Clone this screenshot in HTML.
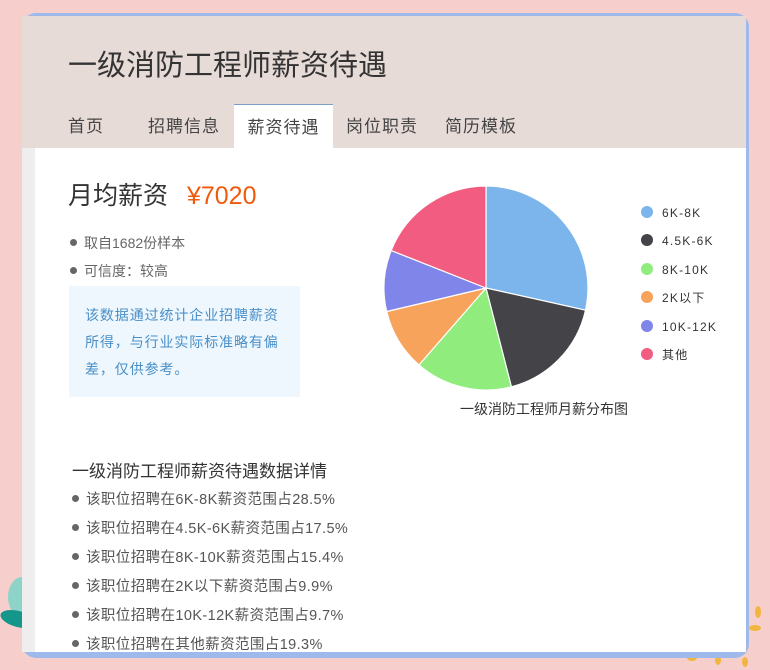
<!DOCTYPE html>
<html><head><meta charset="utf-8"><style>
*{margin:0;padding:0;box-sizing:border-box}
body{width:770px;height:670px;overflow:hidden;background:#f6cfcc;font-family:"Liberation Sans","Noto Sans CJK SC",sans-serif;position:relative}
.card{position:absolute;left:22px;top:13px;width:727px;height:645px;border-radius:14px;background:#9fb9ea}
.inner{position:absolute;left:22px;top:16px;width:724px;height:636px;background:#fff;overflow:hidden}
.strip{position:absolute;left:0;top:0;width:13px;height:100%;background:#eeeeee}
.head{position:absolute;left:0;top:0;width:724px;height:132px;background:#e7dbd8}
.title{position:absolute;left:46px;top:26px;font-size:29px;color:#333}
.tab{position:absolute;top:88px;height:44px;line-height:46px;font-size:17px;letter-spacing:1px;color:#444}
.tab.on{background:#fff;border-top:1px solid #7aa0c8;text-align:center}
.t{position:absolute;color:#333}
.dot{display:inline-block;width:7px;height:7px;border-radius:50%;background:#666;margin-right:7px;vertical-align:middle;position:relative;top:-2px}
</style></head><body>
<svg style="position:absolute;left:0;top:575px" width="40" height="70"><ellipse cx="22" cy="22" rx="14" ry="20" fill="#8dd3c8"/><ellipse cx="18" cy="44" rx="18" ry="8" fill="#15968a" transform="rotate(15 18 44)"/></svg>
<svg style="position:absolute;left:680px;top:600px" width="90" height="70"><ellipse cx="78" cy="12" rx="3" ry="6" fill="#f2b640"/><ellipse cx="62" cy="44" rx="3" ry="6" fill="#f2b640" transform="rotate(30 62 44)"/><ellipse cx="75" cy="28" rx="6" ry="3" fill="#f2b640"/><ellipse cx="38" cy="60" rx="3" ry="5" fill="#f2b640"/><ellipse cx="65" cy="62" rx="3" ry="5" fill="#f2b640"/><ellipse cx="12" cy="58" rx="5" ry="3" fill="#f2b640"/></svg>
<div class="card"></div>
<div class="inner">
<div class="strip"></div>
<div class="head">
<div class="title">一级消防工程师薪资待遇</div>
<div class="tab" style="left:46px">首页</div>
<div class="tab" style="left:126px">招聘信息</div>
<div class="tab on" style="left:212px;width:99px">薪资待遇</div>
<div class="tab" style="left:324px">岗位职责</div>
<div class="tab" style="left:423px">简历模板</div>
</div>
<div class="t" style="left:46px;top:160px;font-size:25px;color:#333">月均薪资 <span style="color:#f15a0c;margin-left:12px">¥7020</span></div>
<div class="t" style="left:48px;top:217px;font-size:14px;color:#666"><span class="dot"></span>取自1682份样本</div>
<div class="t" style="left:48px;top:245px;font-size:14px;color:#666"><span class="dot"></span>可信度：较高</div>
<div style="position:absolute;left:47px;top:270px;width:231px;height:111px;background:#edf7fd;padding:16px 20px 0 16px;font-size:14px;line-height:27px;letter-spacing:0.9px;color:#4a8fc8">该数据通过统计企业招聘薪资所得，与行业实际标准略有偏差，仅供参考。</div>
<div class="t" style="left:50px;top:441px;font-size:17px;color:#333">一级消防工程师薪资待遇数据详情</div>
<div class="t" style="left:50px;top:470px;font-size:14.5px;letter-spacing:0.4px;line-height:29px;color:#555">
<div><span class="dot"></span>该职位招聘在6K-8K薪资范围占28.5%</div>
<div><span class="dot"></span>该职位招聘在4.5K-6K薪资范围占17.5%</div>
<div><span class="dot"></span>该职位招聘在8K-10K薪资范围占15.4%</div>
<div><span class="dot"></span>该职位招聘在2K以下薪资范围占9.9%</div>
<div><span class="dot"></span>该职位招聘在10K-12K薪资范围占9.7%</div>
<div><span class="dot"></span>该职位招聘在其他薪资范围占19.3%</div>
</div>
</div>
<svg style="position:absolute;left:0;top:0" width="770" height="670">
<g stroke="#fff" stroke-width="1.2" stroke-linejoin="round">
<path d="M486 288 L486 186 A102 102 0 0 1 585.5 310.2Z" fill="#7cb5ec"/>
<path d="M486 288 L585.5 310.2 A102 102 0 0 1 511.4 386.8Z" fill="#434348"/>
<path d="M486 288 L511.4 386.8 A102 102 0 0 1 419 364.9Z" fill="#90ed7d"/>
<path d="M486 288 L419 364.9 A102 102 0 0 1 386.7 311.5Z" fill="#f7a35c"/>
<path d="M486 288 L386.7 311.5 A102 102 0 0 1 391.2 250.5Z" fill="#8085e9"/>
<path d="M486 288 L391.2 250.5 A102 102 0 0 1 486 186Z" fill="#f15c80"/>
</g>
<text x="544" y="414" font-size="14" fill="#333" text-anchor="middle" font-family="Liberation Sans,Noto Sans CJK SC,sans-serif">一级消防工程师月薪分布图</text>
<g font-size="12" fill="#333" letter-spacing="1.2" font-family="Liberation Sans,Noto Sans CJK SC,sans-serif">
<circle cx="647" cy="212" r="6" fill="#7cb5ec"/><text x="662" y="217">6K-8K</text>
<circle cx="647" cy="240" r="6" fill="#434348"/><text x="662" y="245">4.5K-6K</text>
<circle cx="647" cy="269" r="6" fill="#90ed7d"/><text x="662" y="274">8K-10K</text>
<circle cx="647" cy="297" r="6" fill="#f7a35c"/><text x="662" y="302">2K以下</text>
<circle cx="647" cy="326" r="6" fill="#8085e9"/><text x="662" y="331">10K-12K</text>
<circle cx="647" cy="354" r="6" fill="#f15c80"/><text x="662" y="359">其他</text>
</g>
</svg>
</body></html>
